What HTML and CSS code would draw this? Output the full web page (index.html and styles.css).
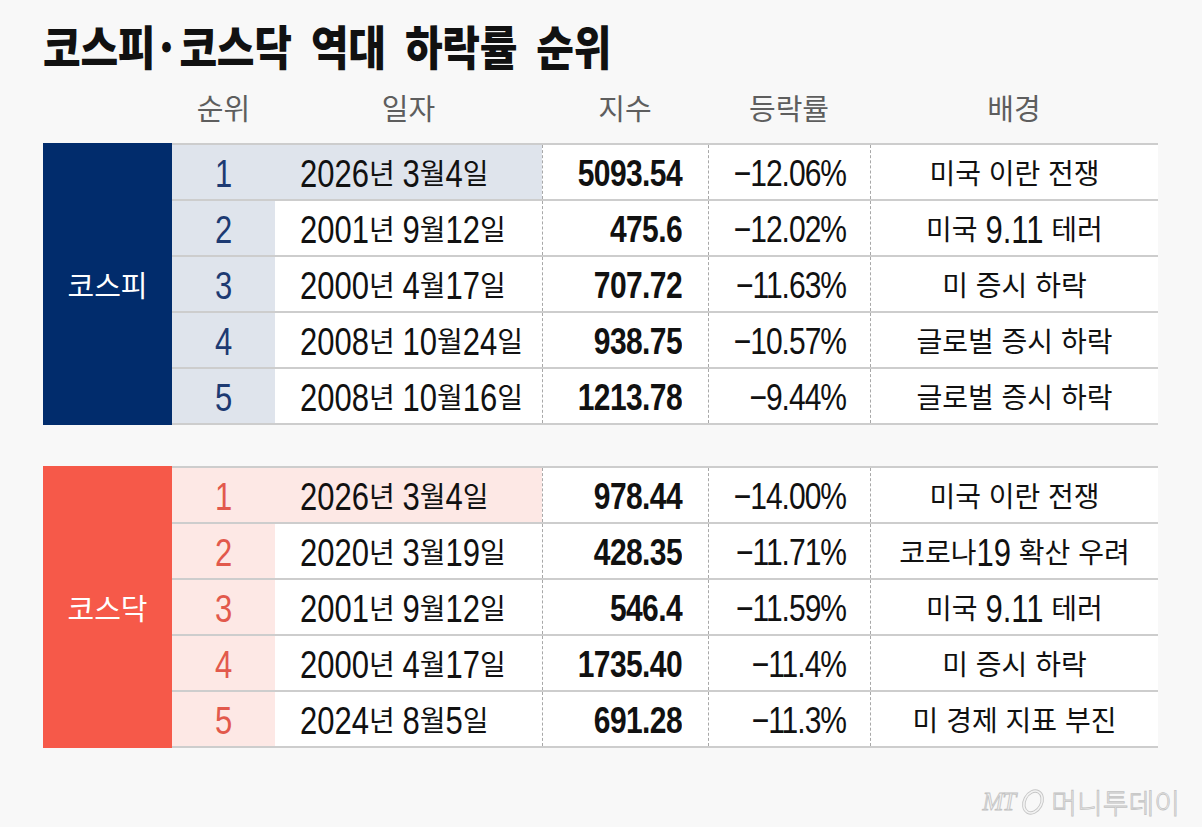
FILE: index.html
```html
<!DOCTYPE html>
<html lang="ko">
<head>
<meta charset="utf-8">
<title>코스피·코스닥 역대 하락률 순위</title>
<link rel="stylesheet" href="styles.css">
</head>
<body>
<div class="page">
  <h1 class="title">코스피<span class="dot">·</span>코스닥 역대 하락률 순위</h1>

  <div class="head">
    <div></div>
    <div>순위</div>
    <div>일자</div>
    <div>지수</div>
    <div>등락률</div>
    <div>배경</div>
  </div>

  <section class="block kospi">
    <div class="label">코스피</div>
    <div class="rows">
      <div class="row hl">
        <div class="c rank"><span class="n">1</span></div>
        <div class="c date"><span class="n">2026</span>년 <span class="n">3</span>월<span class="n">4</span>일</div>
        <div class="c idx"><span class="n">5093.54</span></div>
        <div class="c chg"><span class="n">−12.06%</span></div>
        <div class="c bg">미국 이란 전쟁</div>
      </div>
      <div class="row">
        <div class="c rank"><span class="n">2</span></div>
        <div class="c date"><span class="n">2001</span>년 <span class="n">9</span>월<span class="n">12</span>일</div>
        <div class="c idx"><span class="n">475.6</span></div>
        <div class="c chg"><span class="n">−12.02%</span></div>
        <div class="c bg">미국 <span class="n">9.11</span> 테러</div>
      </div>
      <div class="row">
        <div class="c rank"><span class="n">3</span></div>
        <div class="c date"><span class="n">2000</span>년 <span class="n">4</span>월<span class="n">17</span>일</div>
        <div class="c idx"><span class="n">707.72</span></div>
        <div class="c chg"><span class="n">−11.63%</span></div>
        <div class="c bg">미 증시 하락</div>
      </div>
      <div class="row">
        <div class="c rank"><span class="n">4</span></div>
        <div class="c date"><span class="n">2008</span>년 <span class="n">10</span>월<span class="n">24</span>일</div>
        <div class="c idx"><span class="n">938.75</span></div>
        <div class="c chg"><span class="n">−10.57%</span></div>
        <div class="c bg">글로벌 증시 하락</div>
      </div>
      <div class="row">
        <div class="c rank"><span class="n">5</span></div>
        <div class="c date"><span class="n">2008</span>년 <span class="n">10</span>월<span class="n">16</span>일</div>
        <div class="c idx"><span class="n">1213.78</span></div>
        <div class="c chg"><span class="n">−9.44%</span></div>
        <div class="c bg">글로벌 증시 하락</div>
      </div>
    </div>
  </section>

  <section class="block kosdaq">
    <div class="label">코스닥</div>
    <div class="rows">
      <div class="row hl">
        <div class="c rank"><span class="n">1</span></div>
        <div class="c date"><span class="n">2026</span>년 <span class="n">3</span>월<span class="n">4</span>일</div>
        <div class="c idx"><span class="n">978.44</span></div>
        <div class="c chg"><span class="n">−14.00%</span></div>
        <div class="c bg">미국 이란 전쟁</div>
      </div>
      <div class="row">
        <div class="c rank"><span class="n">2</span></div>
        <div class="c date"><span class="n">2020</span>년 <span class="n">3</span>월<span class="n">19</span>일</div>
        <div class="c idx"><span class="n">428.35</span></div>
        <div class="c chg"><span class="n">−11.71%</span></div>
        <div class="c bg">코로나<span class="n">19</span> 확산 우려</div>
      </div>
      <div class="row">
        <div class="c rank"><span class="n">3</span></div>
        <div class="c date"><span class="n">2001</span>년 <span class="n">9</span>월<span class="n">12</span>일</div>
        <div class="c idx"><span class="n">546.4</span></div>
        <div class="c chg"><span class="n">−11.59%</span></div>
        <div class="c bg">미국 <span class="n">9.11</span> 테러</div>
      </div>
      <div class="row">
        <div class="c rank"><span class="n">4</span></div>
        <div class="c date"><span class="n">2000</span>년 <span class="n">4</span>월<span class="n">17</span>일</div>
        <div class="c idx"><span class="n">1735.40</span></div>
        <div class="c chg"><span class="n">−11.4%</span></div>
        <div class="c bg">미 증시 하락</div>
      </div>
      <div class="row">
        <div class="c rank"><span class="n">5</span></div>
        <div class="c date"><span class="n">2024</span>년 <span class="n">8</span>월<span class="n">5</span>일</div>
        <div class="c idx"><span class="n">691.28</span></div>
        <div class="c chg"><span class="n">−11.3%</span></div>
        <div class="c bg">미 경제 지표 부진</div>
      </div>
    </div>
  </section>

  <footer class="brand">
    <span class="mt">MT</span>
    <svg class="mark" width="26" height="28" viewBox="0 0 26 28" aria-hidden="true">
      <ellipse cx="13" cy="14" rx="8.5" ry="11.5" transform="rotate(28 13 14)" fill="none" stroke="#c6c6c6" stroke-width="3.4"/>
      <ellipse cx="13" cy="14" rx="8.5" ry="11.5" transform="rotate(28 13 14)" fill="none" stroke="#f3f3f3" stroke-width="1.6"/>
    </svg>
    <span class="name">머니투데이</span>
  </footer>
</div>
</body>
</html>
```

FILE: styles.css
```css
* {
  box-sizing: border-box;
  margin: 0;
  padding: 0;
}

html,
body {
  background: #f8f8f8;
}

body {
  width: 1202px;
  height: 827px;
  overflow: hidden;
  font-family: "Noto Sans CJK KR", "Noto Sans", sans-serif;
  color: #111;
}

.page {
  padding: 17px 44px 0 43px;
}

.title {
  font-size: 41px;
  font-weight: 900;
  letter-spacing: -0.3px;
  word-spacing: 8px;
  line-height: 54px;
  color: #111;
  transform: scaleY(1.15);
  transform-origin: 0 50%;
  white-space: nowrap;
}

.title .dot {
  margin: 0 6px 0 4px;
}

.head {
  display: grid;
  grid-template-columns: 129px 103px 267px 166px 162px 288px;
  height: 72px;
  align-items: center;
  text-align: center;
  font-size: 29px;
  font-weight: 400;
  color: #5e5e5e;
}

.block {
  display: grid;
  grid-template-columns: 129px 986px;
}

.kospi {
  --label: #012c6c;
  --tint: #dfe4ec;
  --rankfg: #1d3a72;
}

.kosdaq {
  --label: #f65949;
  --tint: #fde8e5;
  --rankfg: #e2594c;
  margin-top: 41px;
}

.label {
  display: flex;
  align-items: center;
  justify-content: center;
  background: var(--label);
  color: #fff;
  font-size: 29px;
}

.rows {
  border-top: 2px solid #cdcdcd;
}

.row {
  display: grid;
  grid-template-columns: 103px 267px 166px 162px 288px;
  height: 56px;
  border-bottom: 2px solid #cdcdcd;
  background: #fff;
}

.c {
  font-size: 28px;
  line-height: 54px;
  white-space: nowrap;
}

.n {
  display: inline-block;
  font-family: "Liberation Sans", sans-serif;
  font-size: 31px;
  line-height: 1;
  transform: scaleY(1.24);
}

.rank {
  text-align: center;
  background: var(--tint);
  color: var(--rankfg);
}

.date {
  padding-left: 25px;
}

.hl .date {
  background: var(--tint);
}

.idx {
  text-align: right;
  padding-right: 26px;
  border-left: 1px dashed #a8a8a8;
  font-weight: 700;
}

.idx .n {
  font-size: 30px;
  letter-spacing: -0.6px;
}

.chg {
  text-align: right;
  padding-right: 24px;
  border-left: 1px dashed #a8a8a8;
}

.chg .n {
  font-size: 30px;
  letter-spacing: -1px;
}

.bg {
  text-align: center;
  border-left: 1px dashed #a8a8a8;
}

.brand {
  display: flex;
  align-items: center;
  justify-content: flex-end;
  gap: 5px;
  margin-top: 34px;
  margin-right: -22px;
  color: #efefef;
  -webkit-text-stroke: 0.8px #c2c2c2;
}

.mt {
  font-family: "Liberation Serif", serif;
  font-style: italic;
  font-size: 25px;
  letter-spacing: -1px;
}

.name {
  font-size: 28px;
  font-weight: 300;
  letter-spacing: 0;
}
```
